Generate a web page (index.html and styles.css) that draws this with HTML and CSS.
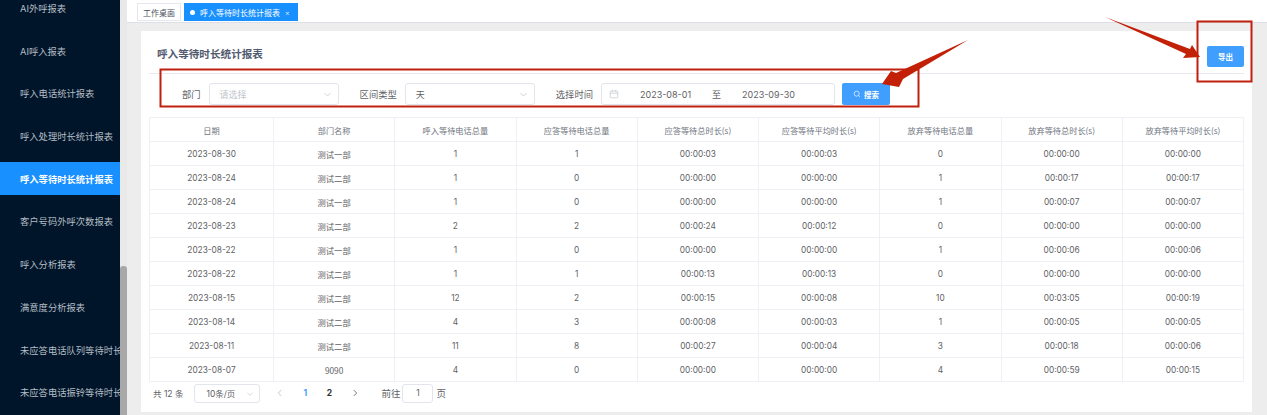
FILE: index.html
```html
<!DOCTYPE html>
<html lang="zh-CN">
<head>
<meta charset="utf-8">
<title>呼入等待时长统计报表</title>
<link rel="stylesheet" href="styles.css">
</head>
<body>
<div class="app">
  <aside class="side">
    <nav class="menu">
      <a class="item">AI外呼报表</a>
      <a class="item">AI呼入报表</a>
      <a class="item">呼入电话统计报表</a>
      <a class="item">呼入处理时长统计报表</a>
      <a class="item active">呼入等待时长统计报表</a>
      <a class="item">客户号码外呼次数报表</a>
      <a class="item">呼入分析报表</a>
      <a class="item">满意度分析报表</a>
      <a class="item">未应答电话队列等待时长报表</a>
      <a class="item">未应答电话振铃等待时长报表</a>
    </nav>
    <div class="scroll"><div class="thumb"></div></div>
  </aside>
  <main class="main">
    <div class="tabs">
      <span class="tab">工作桌面</span>
      <span class="tab on"><i class="dot"></i>呼入等待时长统计报表<span class="x">×</span></span>
    </div>
    <section class="card">
      <header class="head">
        <h1>呼入等待时长统计报表</h1>
        <button class="btn export">导出</button>
      </header>
      <form class="filters">
        <label class="lab l1">部门</label>
        <div class="input w1 ph">请选择<svg class="chev" viewBox="0 0 12 12"><path d="M2 4l4 4 4-4"/></svg></div>
        <label class="lab l2">区间类型</label>
        <div class="input w2">天<svg class="chev" viewBox="0 0 12 12"><path d="M2 4l4 4 4-4"/></svg></div>
        <label class="lab l3">选择时间</label>
        <div class="input range">
          <svg class="cal" viewBox="0 0 12 12"><rect x="1.5" y="2.5" width="9" height="8" rx="1"/><path d="M1.5 5h9M4 1v2M8 1v2"/></svg>
          <span class="d1">2023-08-01</span><span class="to">至</span><span class="d2">2023-09-30</span>
        </div>
        <button type="button" class="btn search"><svg viewBox="0 0 12 12"><circle cx="5.5" cy="5.5" r="3.8"/><path d="M8.4 8.4l2 2"/></svg>搜索</button>
      </form>
      <table class="grid">
        <thead><tr><th>日期</th><th>部门名称</th><th>呼入等待电话总量</th><th>应答等待电话总量</th><th>应答等待总时长(s)</th><th>应答等待平均时长(s)</th><th>放弃等待电话总量</th><th>放弃等待总时长(s)</th><th>放弃等待平均时长(s)</th></tr></thead>
        <tbody>
          <tr><td>2023-08-30</td><td>测试一部</td><td>1</td><td>1</td><td>00:00:03</td><td>00:00:03</td><td>0</td><td>00:00:00</td><td>00:00:00</td></tr>
          <tr><td>2023-08-24</td><td>测试二部</td><td>1</td><td>0</td><td>00:00:00</td><td>00:00:00</td><td>1</td><td>00:00:17</td><td>00:00:17</td></tr>
          <tr><td>2023-08-24</td><td>测试一部</td><td>1</td><td>0</td><td>00:00:00</td><td>00:00:00</td><td>1</td><td>00:00:07</td><td>00:00:07</td></tr>
          <tr><td>2023-08-23</td><td>测试二部</td><td>2</td><td>2</td><td>00:00:24</td><td>00:00:12</td><td>0</td><td>00:00:00</td><td>00:00:00</td></tr>
          <tr><td>2023-08-22</td><td>测试一部</td><td>1</td><td>0</td><td>00:00:00</td><td>00:00:00</td><td>1</td><td>00:00:06</td><td>00:00:06</td></tr>
          <tr><td>2023-08-22</td><td>测试二部</td><td>1</td><td>1</td><td>00:00:13</td><td>00:00:13</td><td>0</td><td>00:00:00</td><td>00:00:00</td></tr>
          <tr><td>2023-08-15</td><td>测试二部</td><td>12</td><td>2</td><td>00:00:15</td><td>00:00:08</td><td>10</td><td>00:03:05</td><td>00:00:19</td></tr>
          <tr><td>2023-08-14</td><td>测试二部</td><td>4</td><td>3</td><td>00:00:08</td><td>00:00:03</td><td>1</td><td>00:00:05</td><td>00:00:05</td></tr>
          <tr><td>2023-08-11</td><td>测试二部</td><td>11</td><td>8</td><td>00:00:27</td><td>00:00:04</td><td>3</td><td>00:00:18</td><td>00:00:06</td></tr>
          <tr><td>2023-08-07</td><td>9090</td><td>4</td><td>0</td><td>00:00:00</td><td>00:00:00</td><td>4</td><td>00:00:59</td><td>00:00:15</td></tr>
        </tbody>
      </table>
      <div class="pager">
        <span class="total">共 12 条</span>
        <div class="size">10条/页<svg class="chev" viewBox="0 0 12 12"><path d="M2 4l4 4 4-4"/></svg></div>
        <svg class="arr prev" viewBox="0 0 12 12"><path d="M7.5 2.5L4 6l3.5 3.5"/></svg>
        <span class="pg cur">1</span>
        <span class="pg">2</span>
        <svg class="arr next" viewBox="0 0 12 12"><path d="M4.5 2.5L8 6l-3.5 3.5"/></svg>
        <span class="goto">前往</span>
        <div class="jump">1</div>
        <span class="unit">页</span>
      </div>
    </section>
  </main>
</div>
<svg class="marks" viewBox="0 0 1267 415" aria-hidden="true">
  <rect class="box" x="160.5" y="69.5" width="758" height="37"/>
  <rect class="box" x="1197.5" y="21.5" width="54" height="60"/>
  <path class="arrow" d="M968 40 L903 79 L899 87 L882 84 L891 71 L896 73Z"/>
  <path class="arrow" d="M1105 17 L1190 49 L1192 45 L1200 57 L1183 58 L1186 54Z"/>
</svg>
</body>
</html>
```
FILE: styles.css
```css
* { box-sizing: border-box; }
html, body { margin: 0; height: 415px; overflow: hidden; }
body { font-family: "Inter", "Liberation Sans", "Noto Sans CJK SC", sans-serif; color: #606266; background: #ededed; position: relative; }
.app { display: flex; height: 415px; }
.side { width: 127px; flex: none; display: flex; background: #001529; }
.menu { width: 120px; height: 415px; overflow: hidden; display: flex; flex-direction: column; gap: 9.7px; padding-top: 0; }
.item { flex: none; height: 33px; display: flex; align-items: center; padding-left: 20px; font-size: 9.3px; color: #b4bcc4; white-space: nowrap; overflow: hidden; }
.item:first-child { margin-top: -8.5px; }
.item.active { background: #1890ff; color: #fff; font-weight: 700; }
.scroll { width: 7px; background: #e9e9e9; padding-top: 266px; }
.thumb { height: 149px; background: #a8a8a8; border-radius: 3px 3px 0 0; }
.main { flex: 1; min-width: 0; display: flex; flex-direction: column; }
.tabs { height: 23px; flex: none; background: #fff; border-bottom: 1px solid #dcdfe6; display: flex; gap: 3px; padding: 3px 0 0 10px; }
.tab { height: 18px; border: 1px solid #e4e7ed; font-size: 8px; display: flex; align-items: center; padding: 0 5px; color: #495060; background: #fff; }
.tab.on { width: 114px; background: #1890ff; border-color: #1890ff; color: #fff; }
.dot { width: 5px; height: 5px; border-radius: 50%; background: #fff; margin-right: 5px; flex: none; }
.x { margin-left: 5px; font-size: 7px; opacity: .8; }
.card { margin: 8px 15px 3px 14px; background: #fff; flex: 1; padding: 0 8px; display: flex; flex-direction: column; }
.head { height: 43px; flex: none; display: flex; align-items: center; justify-content: space-between; border-bottom: 1px solid #e8eaef; padding-left: 8px; }
.head h1 { margin: 2px 0 0; font-size: 10.6px; font-weight: 700; color: #515a6e; }
.btn { border: 0; background: #409eff; color: #fff; border-radius: 2px; font: inherit; font-size: 7.5px; font-weight: 700; display: flex; align-items: center; justify-content: center; padding: 0; }
.export { width: 37px; height: 21px; margin-top: 8px; }
.filters { height: 43px; flex: none; display: flex; align-items: center; padding-bottom: 3px; }
.lab { color: #606266; white-space: nowrap; font-size: 9.3px; margin-right: 8px; }
.l1 { margin-left: 33px; }
.l2 { margin-left: 21px; }
.l3 { margin-left: 21px; }
.input { height: 22px; border: 1px solid #e2e5eb; border-radius: 3px; display: flex; align-items: center; position: relative; padding-left: 10px; font-size: 9px; color: #606266; white-space: nowrap; flex: none; }
.ph { color: #c0c4cc; }
.w1 { width: 130px; }
.w2 { width: 130px; }
.chev { width: 9px; height: 9px; position: absolute; right: 6px; top: 6px; fill: none; stroke: #c0c4cc; stroke-width: 1; }
.range { width: 234px; padding-left: 7px; }
.cal { width: 10px; height: 10px; fill: none; stroke: #c4c8d0; stroke-width: .9; flex: none; }
.d1 { margin-left: 21px; width: 51px; }
.to { margin-left: 21px; width: 8px; }
.d2 { margin-left: 22px; width: 52px; }
.search { width: 48px; height: 22px; margin-left: 7px; gap: 3px; flex: none; }
.search svg { width: 8px; height: 8px; fill: none; stroke: #fff; stroke-width: 1; }
.grid { width: 100%; border-collapse: collapse; table-layout: fixed; font-size: 8.3px; color: #606266; flex: none; }
.grid th, .grid td { border: 1px solid #eef0f6; height: 24px; padding: 0; text-align: center; font-weight: 400; }
.grid th { color: #6f7580; font-size: 8.2px; font-family: "Noto Sans CJK SC", "Inter", sans-serif; }
.grid td:nth-child(2) { font-family: "Noto Sans CJK SC", "Inter", sans-serif; }
.grid th:first-child { width: 124px; }
.pager { height: 22px; flex: none; display: flex; align-items: center; font-size: 8.5px; color: #606266; padding-left: 4px; }
.size { width: 66px; height: 19px; margin-left: 11px; border: 1px solid #e2e5eb; border-radius: 3px; display: flex; align-items: center; padding-left: 11px; position: relative; }
.size .chev { top: 5px; right: 5px; width: 8px; height: 8px; }
.arr { width: 10px; height: 10px; fill: none; stroke: #606266; stroke-width: 1; flex: none; }
.prev { margin-left: 15px; stroke: #b8bcc4; }
.next { margin-left: 18px; }
.pg { margin-left: 17px; font-weight: 700; width: 6px; text-align: center; color: #303133; }
.pg + .pg { margin-left: 18px; }
.pg.cur { color: #409eff; }
.goto { margin-left: 21px; font-size: 9.5px; }
.jump { width: 31px; height: 19px; margin-left: 2px; border: 1px solid #e2e5eb; border-radius: 3px; display: flex; align-items: center; justify-content: center; }
.unit { margin-left: 3px; font-size: 9.5px; }
.marks { position: absolute; left: 0; top: 0; width: 1267px; height: 415px; pointer-events: none; }
.box { fill: none; stroke: #c0200e; stroke-width: 2; }
.arrow { fill: #c32107; }
```
